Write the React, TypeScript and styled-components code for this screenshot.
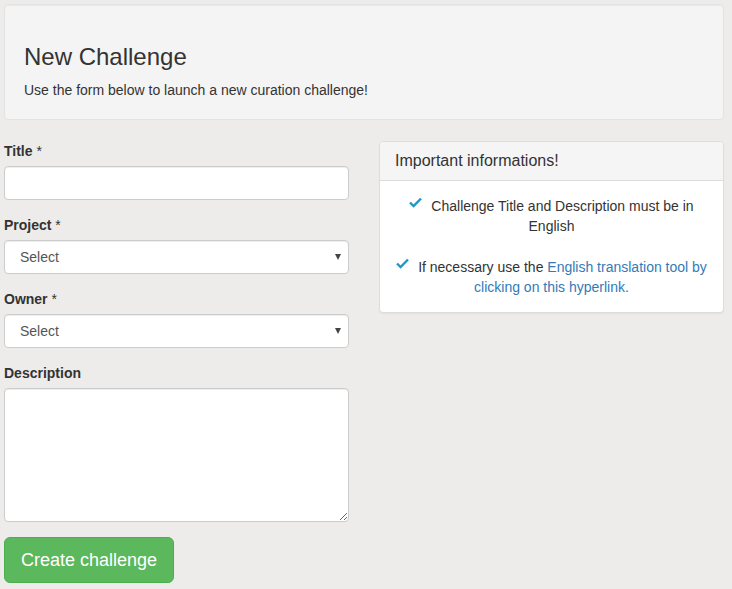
import React from "react";
import styled, { createGlobalStyle } from "styled-components";

const Global = createGlobalStyle`
  html, body { margin: 0; padding: 0; background: #edecea; }
  body {
    font-family: "Liberation Sans", Arial, Helvetica, sans-serif;
    font-size: 14px;
    line-height: 20px;
    color: #333;
  }
  * { box-sizing: border-box; }
`;

const Page = styled.div`
  padding: 4px 8px 20px 4px;
`;

const Well = styled.div`
  background: #f4f4f4;
  border: 1px solid #e3e3e3;
  border-radius: 4px;
  box-shadow: inset 0 1px 1px rgba(0, 0, 0, 0.05);
  padding: 19px;
  margin-bottom: 21px;
`;

const Heading = styled.h3`
  margin: 20px 0 10px;
  font-size: 24px;
  font-weight: 500;
  line-height: 1.1;
  color: #333;
`;

const Lead = styled.p`
  margin: 0;
  font-size: 14px;
`;

const Columns = styled.div`
  display: grid;
  grid-template-columns: 345px 1fr;
  column-gap: 30px;
  align-items: start;
`;

const Form = styled.form`
  display: flex;
  flex-direction: column;
`;

const Group = styled.div`
  display: flex;
  flex-direction: column;
  margin-bottom: 15px;
`;

const Label = styled.label`
  font-weight: 700;
  margin-bottom: 5px;
  line-height: 20px;
`;

const Star = styled.span`
  font-weight: 400;
`;

const controlBase = `
  display: block;
  width: 100%;
  border: 1px solid #ccc;
  border-radius: 4px;
  background: #fff;
  box-shadow: inset 0 1px 1px rgba(0, 0, 0, 0.075);
  font-family: "Liberation Sans", Arial, sans-serif;
  font-size: 14px;
  color: #555;
  outline: none;
`;

const Input = styled.input`
  ${controlBase}
  height: 34px;
  padding: 6px 12px;
`;

const SelectWrap = styled.div`
  position: relative;
  &::after {
    content: "";
    position: absolute;
    right: 8px;
    top: 14px;
    border-left: 3.5px solid transparent;
    border-right: 3.5px solid transparent;
    border-top: 6px solid #444;
    pointer-events: none;
  }
`;

const Select = styled.select`
  ${controlBase}
  height: 34px;
  padding: 6px 12px 6px 15px;
  appearance: none;
  -webkit-appearance: none;
`;

const TextArea = styled.textarea`
  ${controlBase}
  height: 134px;
  padding: 6px 12px;
  resize: vertical;
`;

const Button = styled.button`
  align-self: flex-start;
  height: 46px;
  padding: 10px 16px;
  white-space: nowrap;
  font-family: "Liberation Sans", Arial, sans-serif;
  font-size: 18px;
  line-height: 24px;
  color: #fff;
  background: #5cb85c;
  border: 1px solid #4cae4c;
  border-radius: 6px;
  cursor: pointer;
`;

const Panel = styled.div`
  background: #fff;
  border: 1px solid #ddd;
  border-radius: 4px;
  box-shadow: 0 1px 1px rgba(0, 0, 0, 0.05);
  overflow: hidden;
`;

const PanelHeading = styled.div`
  background: #f5f5f5;
  border-bottom: 1px solid #ddd;
  padding: 10px 15px;
  font-size: 16px;
  line-height: 18px;
  color: #333;
`;

const PanelBody = styled.div`
  padding: 15px;
  display: flex;
  flex-direction: column;
  gap: 21px;
  text-align: center;
`;

const Item = styled.p`
  margin: 0;
`;

const Check = styled.svg`
  display: inline-block;
  width: 13px;
  height: 11px;
  margin-right: 9px;
  vertical-align: 3px;
`;

const Link = styled.a`
  color: #337ab7;
  text-decoration: none;
`;

const CheckIcon = () => (
  <Check viewBox="0 0 13 11" aria-hidden="true">
    <path d="M1 5.5 L4.6 9 L12 1.5" fill="none" stroke="#1f97c9" strokeWidth="2.4" />
  </Check>
);

export default function App() {
  return (
    <Page>
      <Global />
      <Well>
        <Heading>New Challenge</Heading>
        <Lead>Use the form below to launch a new curation challenge!</Lead>
      </Well>
      <Columns>
        <Form onSubmit={(e) => e.preventDefault()}>
          <Group>
            <Label>
              Title <Star>*</Star>
            </Label>
            <Input type="text" />
          </Group>
          <Group>
            <Label>
              Project <Star>*</Star>
            </Label>
            <SelectWrap>
              <Select defaultValue="">
                <option value="">Select</option>
              </Select>
            </SelectWrap>
          </Group>
          <Group>
            <Label>
              Owner <Star>*</Star>
            </Label>
            <SelectWrap>
              <Select defaultValue="">
                <option value="">Select</option>
              </Select>
            </SelectWrap>
          </Group>
          <Group>
            <Label>Description</Label>
            <TextArea />
          </Group>
          <Button type="submit">Create challenge</Button>
        </Form>
        <Panel>
          <PanelHeading>Important informations!</PanelHeading>
          <PanelBody>
            <Item>
              <CheckIcon />
              Challenge Title and Description must be in English
            </Item>
            <Item>
              <CheckIcon />
              If necessary use the{" "}
              <Link href="#">English translation tool by clicking on this hyperlink.</Link>
            </Item>
          </PanelBody>
        </Panel>
      </Columns>
    </Page>
  );
}
